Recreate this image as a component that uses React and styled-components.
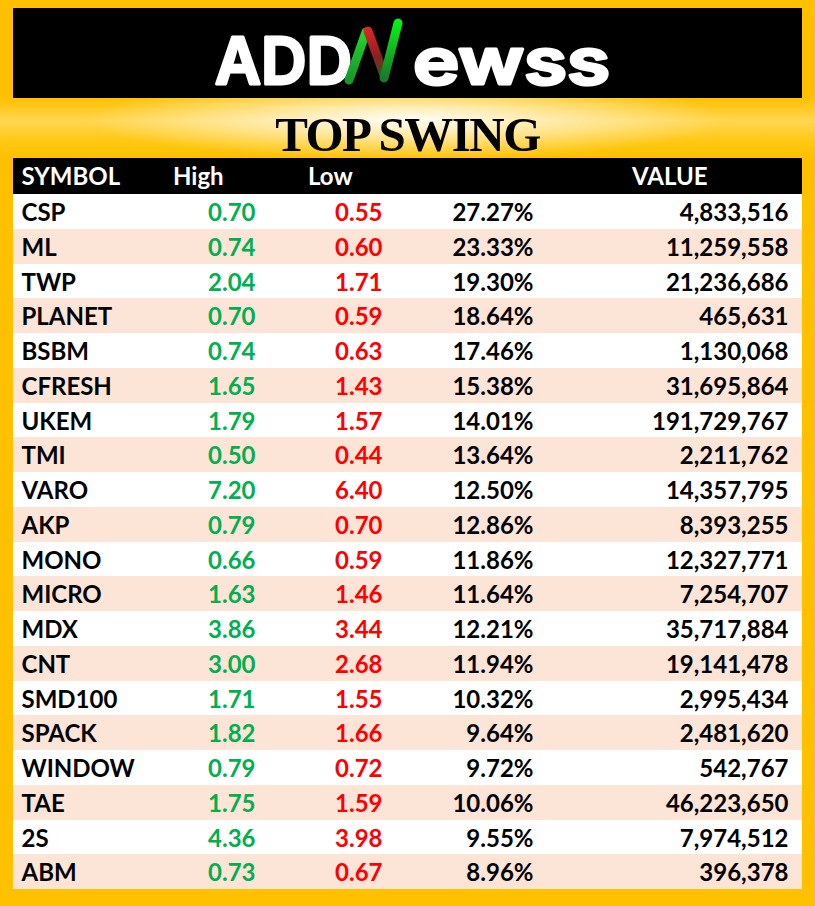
import React from "react";
import styled, { createGlobalStyle } from "styled-components";

const rows = [
  ["CSP", "0.70", "0.55", "27.27%", "4,833,516"],
  ["ML", "0.74", "0.60", "23.33%", "11,259,558"],
  ["TWP", "2.04", "1.71", "19.30%", "21,236,686"],
  ["PLANET", "0.70", "0.59", "18.64%", "465,631"],
  ["BSBM", "0.74", "0.63", "17.46%", "1,130,068"],
  ["CFRESH", "1.65", "1.43", "15.38%", "31,695,864"],
  ["UKEM", "1.79", "1.57", "14.01%", "191,729,767"],
  ["TMI", "0.50", "0.44", "13.64%", "2,211,762"],
  ["VARO", "7.20", "6.40", "12.50%", "14,357,795"],
  ["AKP", "0.79", "0.70", "12.86%", "8,393,255"],
  ["MONO", "0.66", "0.59", "11.86%", "12,327,771"],
  ["MICRO", "1.63", "1.46", "11.64%", "7,254,707"],
  ["MDX", "3.86", "3.44", "12.21%", "35,717,884"],
  ["CNT", "3.00", "2.68", "11.94%", "19,141,478"],
  ["SMD100", "1.71", "1.55", "10.32%", "2,995,434"],
  ["SPACK", "1.82", "1.66", "9.64%", "2,481,620"],
  ["WINDOW", "0.79", "0.72", "9.72%", "542,767"],
  ["TAE", "1.75", "1.59", "10.06%", "46,223,650"],
  ["2S", "4.36", "3.98", "9.55%", "7,974,512"],
  ["ABM", "0.73", "0.67", "8.96%", "396,378"],
];

const GlobalStyle = createGlobalStyle`
  body {
    margin: 0;
    font-family: Lato, "Open Sans", sans-serif;
  }
`;

const Page = styled.div`
  width: 815px;
  height: 906px;
  box-sizing: border-box;
  padding: 8px 13px 17px 12.5px;
  background: #ffc000;
  display: flex;
  flex-direction: column;
`;

const Banner = styled.div`
  height: 90px;
  background: #000;
  display: flex;
  align-items: center;
  justify-content: center;
  padding-left: 8px;
  overflow: hidden;
`;

const TitleBand = styled.div`
  height: 60px;
  box-sizing: border-box;
  margin: 0 -13px 0 -12.5px;
  padding-top: 14px;
  text-align: center;
  background:
    radial-gradient(ellipse 320px 40px at 50% 36%, rgba(255, 255, 255, 0.95), rgba(255, 255, 255, 0) 100%),
    linear-gradient(to bottom, #ffc000 0%, #ffd650 38%, #ffc70f 75%, #ffc000 100%);
`;

const Title = styled.h1`
  margin: 0;
  font-family: "Liberation Serif", "Times New Roman", serif;
  font-weight: 700;
  font-size: 49px;
  line-height: 46px;
  letter-spacing: -1.5px;
  color: #000;
`;

const Table = styled.div`
  display: flex;
  flex-direction: column;
  background: #fff;
`;

const columns = "150px 93px 127px 151px 255px 1fr";

const HeadRow = styled.div`
  display: grid;
  grid-template-columns: ${columns};
  height: 36px;
  background: #000;
  color: #fff;
  font-weight: 700;
  font-size: 24px;
  line-height: 36px;
`;

const HeadCell = styled.div`
  padding-left: ${({ $indent }) => $indent}px;
`;

const Row = styled.div`
  display: grid;
  grid-template-columns: ${columns};
  height: 34.75px;
  background: ${({ $shade }) => ($shade ? "#fce4d6" : "#fff")};
  font-weight: 700;
  font-size: 24px;
  line-height: 35px;
`;

const toneColors = { up: "#00b050", down: "#ff0000", plain: "#000" };

const Cell = styled.div`
  text-align: ${({ $align }) => $align || "right"};
  padding-left: ${({ $align }) => ($align === "left" ? "9px" : "0")};
  color: ${({ $tone }) => toneColors[$tone || "plain"]};
  white-space: nowrap;
`;

const Logo = () => (
  <svg width="410" height="90" viewBox="0 -5 410 90" overflow="visible">
    <defs>
      <linearGradient id="legL" x1="0" y1="1" x2="0" y2="0">
        <stop offset="0" stopColor="#17982c" />
        <stop offset="1" stopColor="#22d62a" />
      </linearGradient>
      <linearGradient id="legR" x1="0" y1="1" x2="0" y2="0">
        <stop offset="0" stopColor="#197a2a" />
        <stop offset="1" stopColor="#08f015" />
      </linearGradient>
      <linearGradient id="legD" x1="0" y1="0" x2="0" y2="1">
        <stop offset="0" stopColor="#d8232a" />
        <stop offset="0.6" stopColor="#8a1f22" />
        <stop offset="1" stopColor="#2f5a22" />
      </linearGradient>
    </defs>
    <g fill="#fff" stroke="#fff" strokeWidth="3" strokeLinejoin="round" fontFamily="Inter, Lato, sans-serif" fontWeight="600" fontSize="64">
      <text x="9" y="71" textLength="137" lengthAdjust="spacingAndGlyphs">ADD</text>
      <text x="207" y="71" textLength="197" lengthAdjust="spacingAndGlyphs">ewss</text>
    </g>
    <g strokeLinecap="round" strokeWidth="9" fill="none">
      <path d="M143 67 L160 19" stroke="url(#legL)" />
      <path d="M162 18 L178 62" stroke="url(#legD)" />
      <path d="M178 65 L192 10" stroke="url(#legR)" />
    </g>
  </svg>
);

const App = () => (
  <>
    <GlobalStyle />
    <Page>
      <Banner>
        <Logo />
      </Banner>
      <TitleBand>
        <Title>TOP SWING</Title>
      </TitleBand>
      <Table>
        <HeadRow>
          <HeadCell $indent={9}>SYMBOL</HeadCell>
          <HeadCell $indent={10.5}>High</HeadCell>
          <HeadCell $indent={52.5}>Low</HeadCell>
          <HeadCell $indent={0} />
          <HeadCell $indent={98.5}>VALUE</HeadCell>
        </HeadRow>
        {rows.map(([sym, high, low, pct, value], i) => (
          <Row key={sym} $shade={i % 2 === 1}>
            <Cell $align="left">{sym}</Cell>
            <Cell $tone="up">{high}</Cell>
            <Cell $tone="down">{low}</Cell>
            <Cell>{pct}</Cell>
            <Cell>{value}</Cell>
          </Row>
        ))}
      </Table>
    </Page>
  </>
);

export default App;
